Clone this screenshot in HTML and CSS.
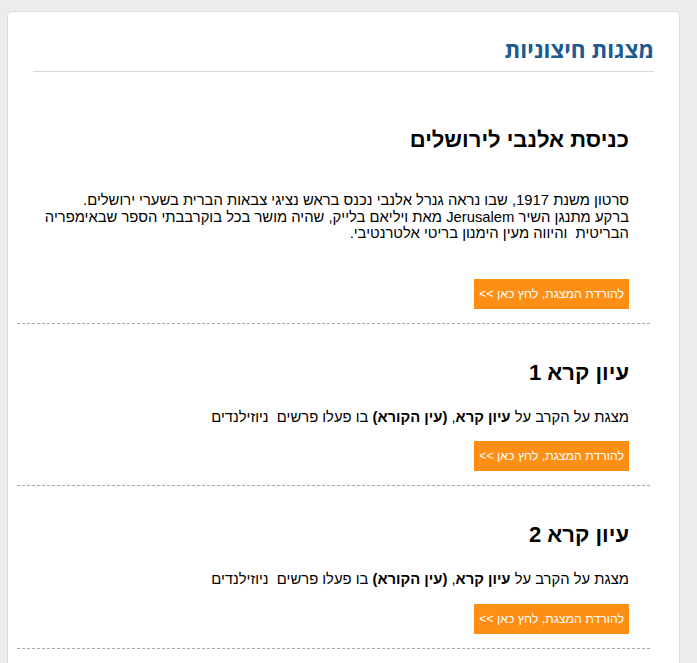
FILE: index.html
```html
<!DOCTYPE html>
<html lang="he" dir="rtl">

<head>
    <meta charset="UTF-8">
    <meta name="viewport" content="width=device-width, initial-scale=1.0">
    <title>מצגות חיצוניות</title>
    <link rel="stylesheet" href="styles.css">
</head>

<body>
    <div class="card">
        <h1 class="page-title">מצגות חיצוניות</h1>

        <div class="item item-first">
            <h2>כניסת אלנבי לירושלים</h2>
            <p>סרטון משנת 1917, שבו נראה גנרל אלנבי נכנס בראש נציגי צבאות הברית בשערי ירושלים.<br>
                ברקע מתנגן השיר Jerusalem מאת ויליאם בלייק, שהיה מושר בכל בוקרבבתי הספר שבאימפריה הבריטית&nbsp; והיווה מעין הימנון בריטי אלטרנטיבי.</p>
            <a class="download" href="#">להורדת המצגת, לחץ כאן &gt;&gt;</a>
        </div>

        <div class="item">
            <h2>עיון קרא 1</h2>
            <p>מצגת על הקרב על <b>עיון קרא</b>, <b>(עין הקורא)</b> בו פעלו פרשים&nbsp; ניוזילנדים</p>
            <a class="download" href="#">להורדת המצגת, לחץ כאן &gt;&gt;</a>
        </div>

        <div class="item">
            <h2>עיון קרא 2</h2>
            <p>מצגת על הקרב על <b>עיון קרא</b>, <b>(עין הקורא)</b> בו פעלו פרשים&nbsp; ניוזילנדים</p>
            <a class="download" href="#">להורדת המצגת, לחץ כאן &gt;&gt;</a>
        </div>
    </div>
</body>

</html>
```

FILE: styles.css
```css
body {
    font-family: 'Liberation Sans', Arial, sans-serif;
    background-color: #ececec;
    margin: 0;
    padding: 11px 17px 0 7px;
    color: #000;
}

.card {
    background: #fff;
    border: 1px solid #dcdcdc;
    border-bottom: none;
    border-radius: 5px 5px 0 0;
    min-height: 700px;
}

.page-title {
    font-family: 'Open Sans', 'Liberation Sans', sans-serif;
    font-size: 22.5px;
    line-height: 24px;
    font-weight: bold;
    color: #1d5a91;
    margin: 26px 25px 0 25px;
    padding-bottom: 9px;
    border-bottom: 1px solid #d8d8d8;
}

.item {
    display: flex;
    flex-direction: column;
    align-items: flex-start;
    margin: 0 29px 0 9px;
    padding: 0 21px 14px 16px;
    border-bottom: 1px dashed #a8a8a8;
}

h2 {
    font-size: 22px;
    line-height: 26px;
    font-weight: bold;
    margin: 36px 0 0 0;
}

p {
    font-size: 14.8px;
    line-height: 16.5px;
    margin: 23px 0 0 0;
}

.item-first h2 {
    margin-top: 55px;
}

.item-first p {
    margin-top: 39px;
}

.download {
    background: #ff8e14;
    color: #fff;
    font-size: 12.3px;
    line-height: 16px;
    padding: 7px 5px;
    margin-top: 16px;
    text-decoration: none;
}

.item-first .download {
    margin-top: 37px;
}
```
